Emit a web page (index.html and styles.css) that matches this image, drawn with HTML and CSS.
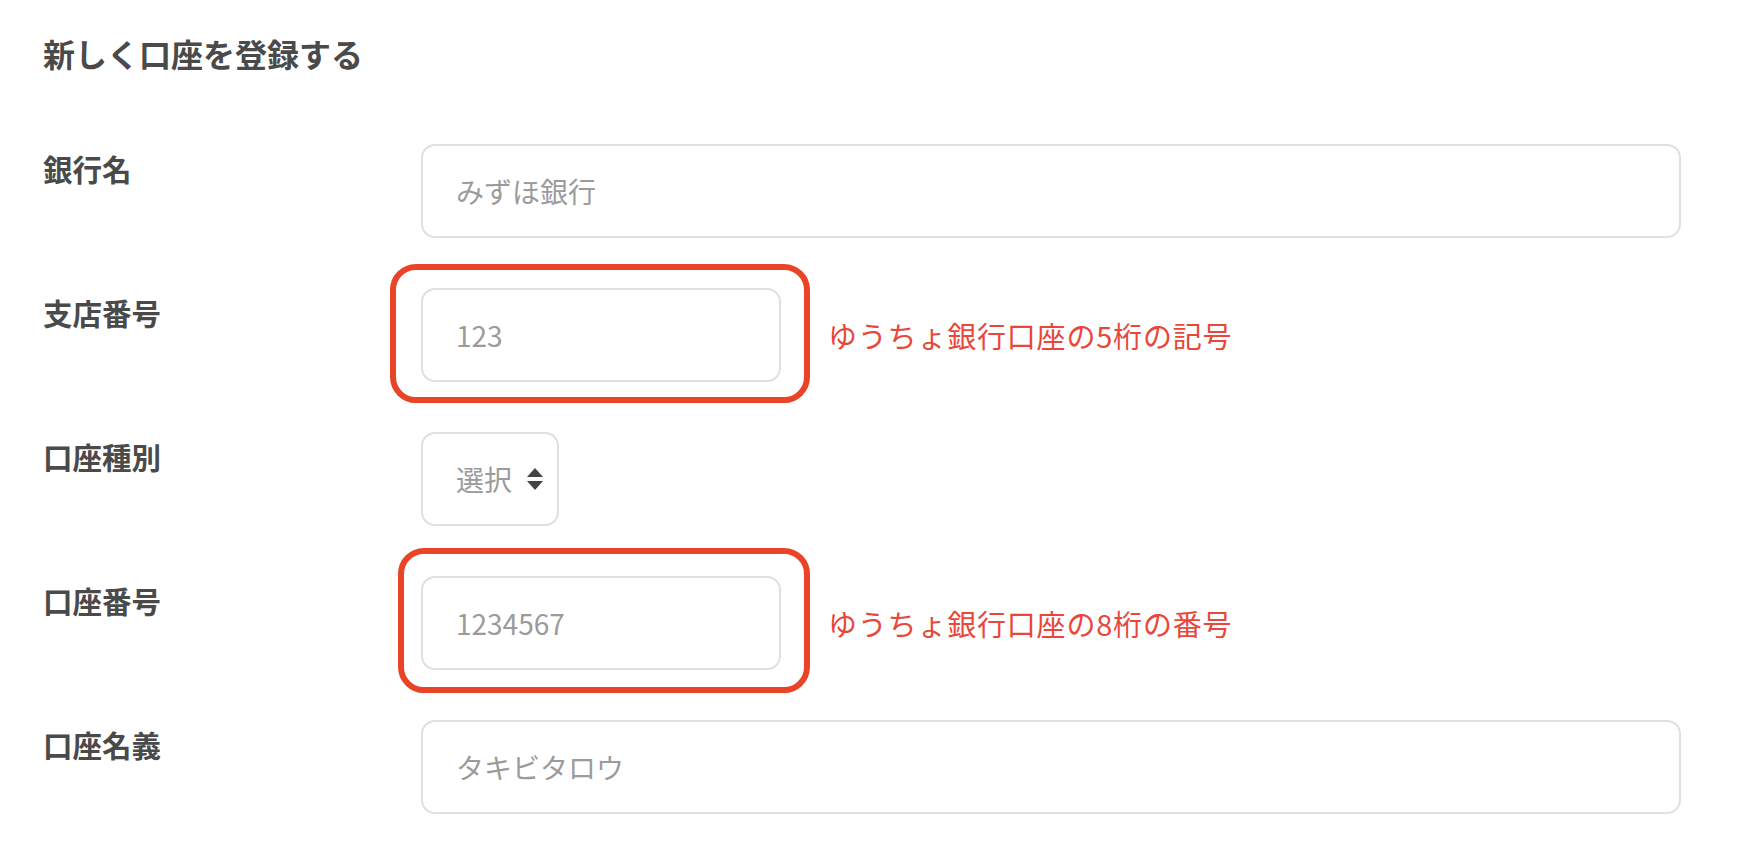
FILE: index.html
```html
<!DOCTYPE html>
<html lang="ja">
<head>
<meta charset="utf-8">
<title>新しく口座を登録する</title>
<link rel="stylesheet" href="styles.css">
</head>
<body>
<main class="page">
  <h1 class="title">新しく口座を登録する</h1>
  <form class="form">
    <div class="row">
      <label class="label">銀行名</label>
      <div class="field">
        <input class="input input-wide" type="text" placeholder="みずほ銀行">
      </div>
    </div>
    <div class="row">
      <label class="label">支店番号</label>
      <div class="field">
        <div class="wrap">
          <input class="input input-short" type="text" placeholder="123">
          <span class="mark mark-1"></span>
        </div>
        <span class="note">ゆうちょ銀行口座の5桁の記号</span>
      </div>
    </div>
    <div class="row">
      <label class="label">口座種別</label>
      <div class="field">
        <div class="select" role="listbox">
          <span class="select-text">選択</span>
          <svg class="select-arrows" width="16" height="22" viewBox="0 0 16 22" aria-hidden="true">
            <path d="M8 0 L16 9 L0 9 Z" fill="#444"/>
            <path d="M0 13 L16 13 L8 22 Z" fill="#444"/>
          </svg>
        </div>
      </div>
    </div>
    <div class="row">
      <label class="label">口座番号</label>
      <div class="field">
        <div class="wrap">
          <input class="input input-short" type="text" placeholder="1234567">
          <span class="mark mark-2"></span>
        </div>
        <span class="note">ゆうちょ銀行口座の8桁の番号</span>
      </div>
    </div>
    <div class="row">
      <label class="label">口座名義</label>
      <div class="field">
        <input class="input input-wide" type="text" placeholder="タキビタロウ">
      </div>
    </div>
  </form>
</main>
</body>
</html>
```

FILE: styles.css
```css
* { box-sizing: border-box; }

html, body {
  margin: 0;
  padding: 0;
  background: #ffffff;
}

body {
  font-family: "Noto Sans CJK JP", "Noto Sans", sans-serif;
  color: #4a4a4a;
}

.page {
  padding: 31px 61px 0 43px;
}

.title {
  margin: 0;
  font-size: 32px;
  line-height: 44px;
  font-weight: 700;
  color: #4a4a4a;
}

.form {
  margin-top: 69px;
  display: flex;
  flex-direction: column;
  gap: 50px;
}

.row {
  display: grid;
  grid-template-columns: 378px 1fr;
  align-items: start;
}

.label {
  padding-top: 4px;
  font-size: 29.5px;
  line-height: 40px;
  font-weight: 700;
  color: #4a4a4a;
}

.field {
  display: flex;
  align-items: center;
}

.input {
  height: 94px;
  padding: 0 33px;
  border: 2px solid #dde0e7;
  border-radius: 14px;
  font-family: "Noto Sans CJK JP", "Noto Sans", sans-serif;
  font-size: 28px;
  color: #333;
  background: #fff;
  outline: none;
}

.input::placeholder {
  color: #9b9b9b;
}

.input-wide {
  width: 100%;
}

.input-short {
  width: 360px;
  display: block;
}

.wrap {
  position: relative;
}

.mark {
  position: absolute;
  border: 6px solid #e94427;
  border-radius: 26px;
  pointer-events: none;
}

.mark-1 {
  left: -31px;
  top: -24px;
  width: 420px;
  height: 139px;
}

.mark-2 {
  left: -23px;
  top: -28px;
  width: 412px;
  height: 145px;
}

.note {
  margin-left: 47px;
  font-size: 29px;
  letter-spacing: 0.8px;
  color: #e8473a;
  white-space: nowrap;
}

.select {
  width: 138px;
  height: 94px;
  padding: 0 14px 0 33px;
  border: 2px solid #dde0e7;
  border-radius: 14px;
  display: flex;
  align-items: center;
  justify-content: space-between;
}

.select-text {
  font-size: 28px;
  color: #9b9b9b;
}

.select-arrows {
  display: block;
}
```
